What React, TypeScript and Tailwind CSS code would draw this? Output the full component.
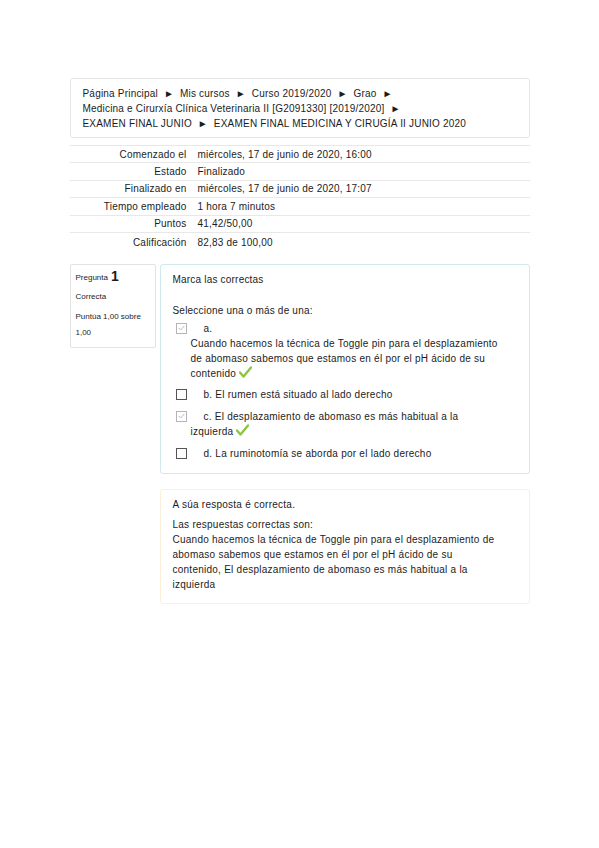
import React from 'react';

const summary = [
    ['Comenzado el', 'miércoles, 17 de junio de 2020, 16:00'],
    ['Estado', 'Finalizado'],
    ['Finalizado en', 'miércoles, 17 de junio de 2020, 17:07'],
    ['Tiempo empleado', '1 hora 7 minutos'],
    ['Puntos', '41,42/50,00'],
    ['Calificación', '82,83 de 100,00'],
];

const Check = () => (
    <svg width="13" height="12" viewBox="0 0 13 12" className="inline-block align-[-1px] ml-[3px]">
        <path d="M1 6.5 L4.5 10.5 L12 1.5" fill="none" stroke="#8cc63f" strokeWidth="2.4" strokeLinecap="round" strokeLinejoin="round" />
    </svg>
);

const Box = ({ checked }: { checked?: boolean }) => (
    <span className={`inline-flex items-center justify-center w-[11px] h-[11px] border shrink-0 ${checked ? 'border-[#b5b5b5]' : 'border-[#555]'}`}>
        {checked && (
            <svg width="7" height="6" viewBox="0 0 7 6">
                <path d="M0.8 3 L2.8 5 L6.3 0.8" fill="none" stroke="#b5b5b5" strokeWidth="0.9" />
            </svg>
        )}
    </span>
);

const App = () => {
    return (
        <div className="min-h-[848px] bg-white text-[#1c1c1c] font-['Liberation_Sans',Arial,sans-serif]">
            <div className="w-[460px] mx-auto pt-[78px]">
                <div className="border border-[#e6e6e6] rounded-[3px] px-[12px] pt-[7px] pb-[6px] text-[10px] leading-[15px] tracking-[0.2px]">
                    <div>Página Principal &nbsp;► &nbsp;Mis cursos &nbsp;► &nbsp;Curso 2019/2020 &nbsp;► &nbsp;Grao &nbsp;►</div>
                    <div>Medicina e Cirurxía Clínica Veterinaria II [G2091330] [2019/2020] &nbsp;►</div>
                    <div>EXAMEN FINAL JUNIO &nbsp;► &nbsp;EXAMEN FINAL MEDICINA Y CIRUGÍA II JUNIO 2020</div>
                </div>

                <div className="mt-[7px] text-[10px] tracking-[0.2px]">
                    {summary.map(([k, v], i) => (
                        <div key={k} className={`flex border-t border-[#e8e8e8] items-center ${i === summary.length - 1 ? 'h-[20px]' : 'h-[17.4px]'}`}>
                            <div className="w-[117px] text-right">{k}</div>
                            <div className="pl-[11px]">{v}</div>
                        </div>
                    ))}
                </div>

                <div className="flex gap-[4px] mt-[12px] items-start">
                    <div className="w-[86px] shrink-0 border border-[#e3e3e3] rounded-[2px] px-[5px] pt-[4px] pb-[6px] text-[8px] leading-[10px]">
                        <div className="flex items-end gap-[3px]">
                            <span>Pregunta</span>
                            <span className="text-[14px] leading-[14px] font-bold">1</span>
                        </div>
                        <div className="mt-[9px]">Correcta</div>
                        <div className="mt-[7px] leading-[16px]">Puntúa 1,00 sobre<br />1,00</div>
                    </div>

                    <div className="flex-1 flex flex-col gap-[15px]">
                        <div className="border border-[#cfe9ef] rounded-[3px] px-[12px] pt-[7px] pb-[12px] text-[10px]">
                            <div className="leading-[15px] tracking-[0.2px]">Marca las correctas</div>
                            <div className="mt-[16px] leading-[15px] tracking-[0.2px]">Seleccione una o más de una:</div>
                            <div className="mt-[3px] pl-[3px] leading-[15px] tracking-[0.25px]">
                                <div className="flex items-center gap-[17px]">
                                    <Box checked />
                                    <span>a.</span>
                                </div>
                                <div className="pl-[15px]">
                                    Cuando hacemos la técnica de Toggle pin para el desplazamiento<br />
                                    de abomaso sabemos que estamos en él por el pH ácido de su<br />
                                    contenido<Check />
                                </div>
                                <div className="flex items-center gap-[17px] mt-[6px]">
                                    <Box />
                                    <span>b. El rumen está situado al lado derecho</span>
                                </div>
                                <div className="mt-[7px]">
                                    <div className="flex items-center gap-[17px]">
                                        <Box checked />
                                        <span>c. El desplazamiento de abomaso es más habitual a la</span>
                                    </div>
                                    <div className="pl-[15px]">izquierda<Check /></div>
                                </div>
                                <div className="flex items-center gap-[17px] mt-[7px]">
                                    <Box />
                                    <span>d. La ruminotomía se aborda por el lado derecho</span>
                                </div>
                            </div>
                        </div>

                        <div className="border border-[#fcf0dc] rounded-[3px] px-[12px] pt-[7px] pb-[11px] text-[10px] leading-[15px] tracking-[0.25px]">
                            <div>A súa resposta é correcta.</div>
                            <div className="mt-[5px]">Las respuestas correctas son:</div>
                            <div>
                                Cuando hacemos la técnica de Toggle pin para el desplazamiento de<br />
                                abomaso sabemos que estamos en él por el pH ácido de su<br />
                                contenido, El desplazamiento de abomaso es más habitual a la<br />
                                izquierda
                            </div>
                        </div>
                    </div>
                </div>
            </div>
        </div>
    );
};

export default App;
